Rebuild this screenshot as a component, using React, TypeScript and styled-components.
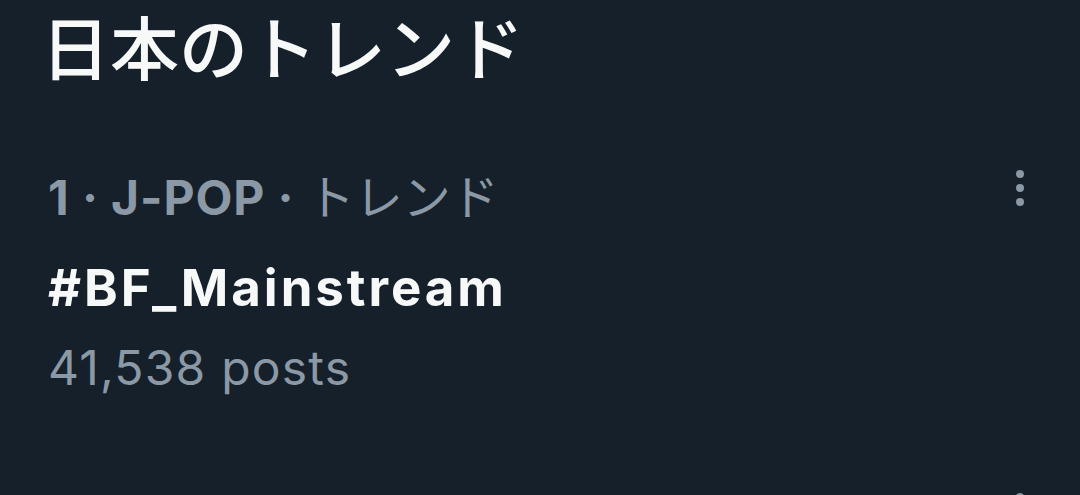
import styled, { createGlobalStyle } from "styled-components";

const GlobalStyle = createGlobalStyle`
  html, body {
    margin: 0;
    padding: 0;
    background: #16202a;
  }
  body {
    font-family: Inter, "Noto Sans CJK JP", sans-serif;
    overflow: hidden;
  }
`;

const Page = styled.div`
  width: 1080px;
  height: 495px;
  overflow: hidden;
  background: #16202a;
`;

const Heading = styled.h2`
  margin: 0;
  padding-left: 41px;
  height: 94px;
  font-size: 69px;
  line-height: 90px;
  font-weight: 500;
  color: #f7f9f9;
  font-family: "Noto Sans CJK JP", sans-serif;
`;

const TrendRow = styled.div`
  display: flex;
  align-items: flex-start;
  height: 323px;
  box-sizing: border-box;
  padding: 64px 56px 0 48px;
`;

const TrendBody = styled.div`
  flex: 1;
  display: flex;
  flex-direction: column;
`;

const Meta = styled.div`
  font-size: 48px;
  line-height: 80px;
  font-weight: 700;
  letter-spacing: 0.9px;
  color: #8b98a5;
  white-space: nowrap;

  span {
    font-weight: 400;
    letter-spacing: 0;
  }
`;

const TrendName = styled.div`
  font-size: 51px;
  line-height: 100px;
  font-weight: 700;
  letter-spacing: 2.95px;
  color: #f7f9f9;
`;

const PostCount = styled.div`
  font-size: 48px;
  line-height: 60px;
  font-weight: 400;
  letter-spacing: 1.2px;
  color: #8b98a5;
`;

const MenuButton = styled.div`
  margin-top: 12px;
  width: 8px;
  display: flex;
`;

type Trend = {
  rank: number;
  category: string;
  name: string;
  posts: string;
};

const trends: Trend[] = [
  { rank: 1, category: "J-POP", name: "#BF_Mainstream", posts: "41,538 posts" },
  { rank: 2, category: "エンタメ", name: "#ROSE", posts: "12,204 posts" },
];

const Dots = () => (
  <svg width="8" height="36" viewBox="0 0 8 36">
    <circle cx="4" cy="4" r="4" fill="#8b98a5" />
    <circle cx="4" cy="18" r="4" fill="#8b98a5" />
    <circle cx="4" cy="32" r="4" fill="#8b98a5" />
  </svg>
);

export default function App() {
  return (
    <Page>
      <GlobalStyle />
      <Heading>日本のトレンド</Heading>
      {trends.map((t) => (
        <TrendRow key={t.rank}>
          <TrendBody>
            <Meta>
              {t.rank} · {t.category} · <span>トレンド</span>
            </Meta>
            <TrendName>{t.name}</TrendName>
            <PostCount>{t.posts}</PostCount>
          </TrendBody>
          <MenuButton>
            <Dots />
          </MenuButton>
        </TrendRow>
      ))}
    </Page>
  );
}
